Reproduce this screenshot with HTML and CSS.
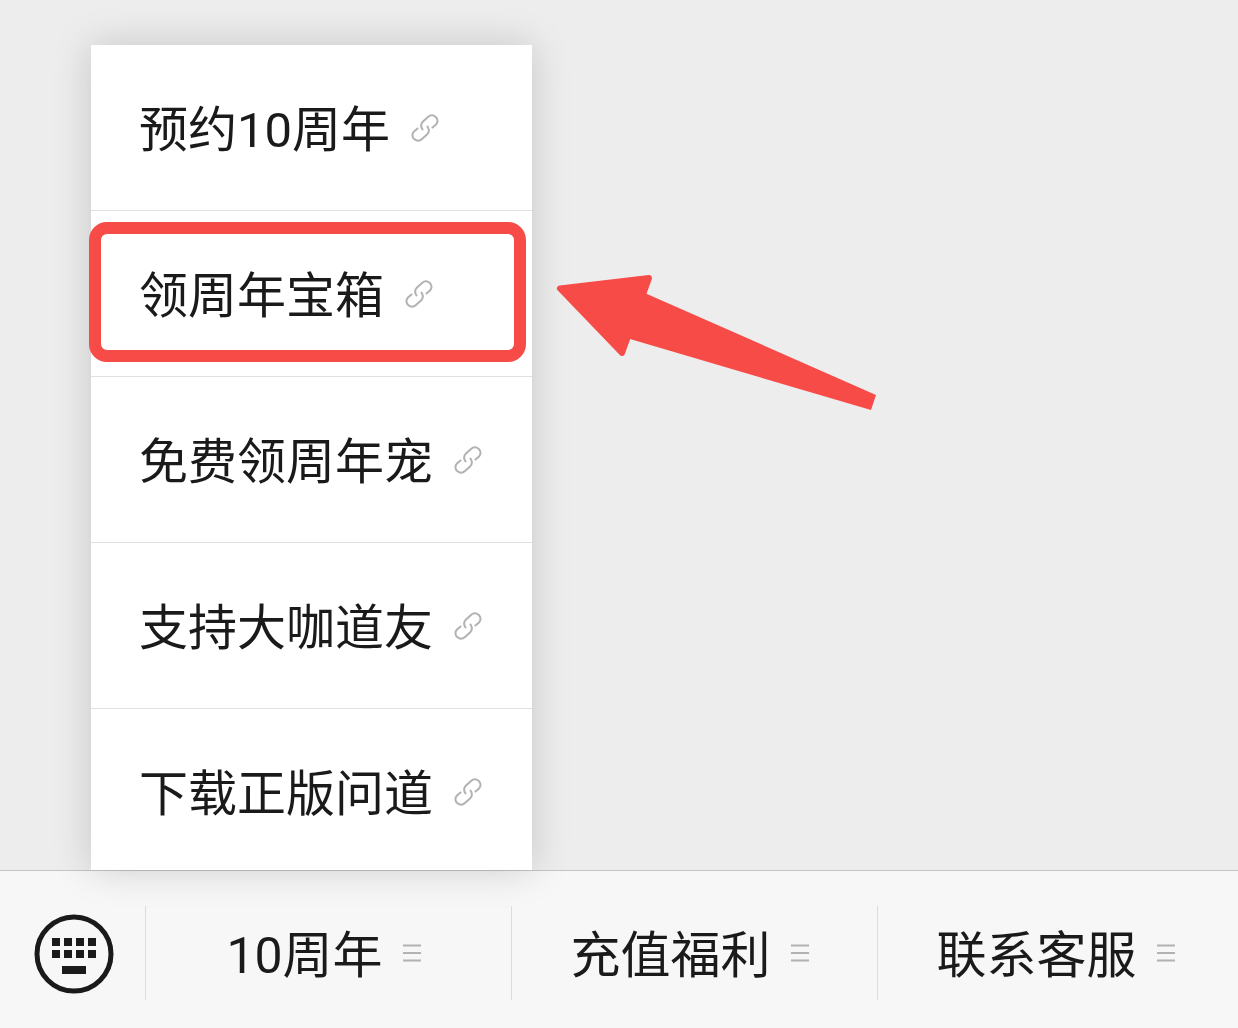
FILE: index.html
```html
<!DOCTYPE html>
<html lang="zh-CN">
<head>
    <meta charset="UTF-8">
    <meta name="viewport" content="width=device-width, initial-scale=1.0">
    <title>10周年</title>
    <link rel="stylesheet" href="styles.css">
</head>
<body>
    <svg class="sprite" aria-hidden="true">
        <symbol id="link" viewBox="0 0 28 28">
            <path d="M11.500 15.500C9.500 12.500 10 9.500 12 7.500L17 3C19.500 .8 22.500 1 24.800 3C27.200 5.200 27 8.500 25 10.500L21.500 13.500M16.500 12.500C18.500 15.500 18 18.500 16 20.500L11 25C8.500 27.200 5.500 27 3.200 25C.8 22.800 1 19.500 3 17.500L6.500 14.500"/>
        </symbol>
        <symbol id="lines" viewBox="0 0 18 18">
            <path d="M0 1.500H18M0 9H18M0 16.500H18"/>
        </symbol>
    </svg>

    <main class="chat">
        <ul class="menu">
            <li class="menu-row"><a class="menu-link" href="#">预约10周年<svg class="link-icon"><use href="#link"/></svg></a></li>
            <li class="menu-row marked">
                <a class="menu-link" href="#">领周年宝箱<svg class="link-icon"><use href="#link"/></svg></a>
                <svg class="arrow" viewBox="0 0 320 138" aria-hidden="true">
                    <path class="arrow-head" d="M4 15.500L93 5L66 80Z"/>
                    <path d="M60 10L91 21L320 122L315 137L74 66L50 50Z"/>
                </svg>
            </li>
            <li class="menu-row"><a class="menu-link" href="#">免费领周年宠<svg class="link-icon"><use href="#link"/></svg></a></li>
            <li class="menu-row"><a class="menu-link" href="#">支持大咖道友<svg class="link-icon"><use href="#link"/></svg></a></li>
            <li class="menu-row"><a class="menu-link" href="#">下载正版问道<svg class="link-icon"><use href="#link"/></svg></a></li>
        </ul>
    </main>

    <footer class="bar">
        <button class="keyboard" type="button" aria-label="键盘">
            <svg class="keyboard-icon" viewBox="0 0 80 80">
                <circle cx="40" cy="40" r="37"/>
                <path d="M18 24h8v8h-8zM30 24h8v8h-8zM42 24h8v8h-8zM54 24h8v8h-8zM18 36h8v8h-8zM30 36h8v8h-8zM42 36h8v8h-8zM54 36h8v8h-8zM28 52h24v8h-24z"/>
            </svg>
        </button>
        <nav class="tabs">
            <button class="tab" type="button">10周年<svg class="lines-icon"><use href="#lines"/></svg></button>
            <button class="tab" type="button">充值福利<svg class="lines-icon"><use href="#lines"/></svg></button>
            <button class="tab" type="button">联系客服<svg class="lines-icon"><use href="#lines"/></svg></button>
        </nav>
    </footer>
</body>
</html>
```

FILE: styles.css
```css
* {
    box-sizing: border-box;
}
body {
    display: flex;
    flex-direction: column;
    min-height: 100vh;
    margin: 0;
    background: #ededed;
    color: #1a1a1a;
    font-family: Roboto, "Noto Sans CJK SC", sans-serif;
    overflow-x: hidden;
}
.sprite {
    display: none;
}
.chat {
    display: flex;
    flex: 1;
    align-items: flex-end;
    padding: 40px 91px 0;
}
.menu {
    position: relative;
    z-index: 1;
    margin: 0;
    padding: 0;
    list-style: none;
    background: #fff;
    box-shadow: 0 0 36px rgba(0, 0, 0, 0.17);
}
.menu-row {
    position: relative;
    border-bottom: 1px solid #e0e0e0;
}
.menu-row:last-child {
    border-bottom: 0;
}
.menu-link {
    display: flex;
    align-items: flex-start;
    gap: 21px;
    padding: 50px 50px 43px 48px;
    color: inherit;
    font-size: 49px;
    line-height: 72px;
    text-decoration: none;
    white-space: nowrap;
}
.menu-row:last-child .menu-link {
    padding-bottom: 39px;
}
.link-icon {
    width: 28px;
    height: 28px;
    margin-top: 19px;
    fill: none;
    stroke: #b2b2b2;
    stroke-width: 2;
    stroke-linecap: round;
}
/* red frame around the row */
.marked::after {
    content: "";
    position: absolute;
    top: 11px;
    right: 6px;
    bottom: 14px;
    left: -2px;
    border: 12px solid #f74b47;
    border-radius: 18px;
    pointer-events: none;
}
.arrow {
    position: absolute;
    top: 62px;
    left: 100%;
    width: 320px;
    height: 138px;
    margin-left: 24px;
    fill: #f74b47;
    pointer-events: none;
}
.arrow-head {
    stroke: #f74b47;
    stroke-width: 6;
    stroke-linejoin: round;
}
.bar {
    display: flex;
    align-items: center;
    height: 158px;
    border-top: 1px solid #c4c4c4;
    background: #f7f7f7;
    overflow: hidden;
}
.keyboard {
    width: 145px;
    padding: 11px 0 0 34px;
    border: 0;
    background: none;
    text-align: left;
}
.keyboard-icon {
    width: 80px;
    height: 80px;
    fill: #1a1a1a;
}
.keyboard-icon circle {
    fill: none;
    stroke: #1a1a1a;
    stroke-width: 5;
}
.tabs {
    display: flex;
    flex: 1;
    margin: 6px -5px 0 0;
}
.tab {
    display: flex;
    flex: 1;
    align-items: center;
    justify-content: center;
    gap: 20px;
    height: 94px;
    padding: 0 10px 4px 0;
    border: 0;
    border-left: 1px solid #dcdcdc;
    background: none;
    color: inherit;
    font-family: inherit;
    font-size: 50px;
    white-space: nowrap;
}
.lines-icon {
    width: 18px;
    height: 18px;
    margin-top: 4px;
    stroke: #b2b2b2;
    stroke-width: 2;
}
```
